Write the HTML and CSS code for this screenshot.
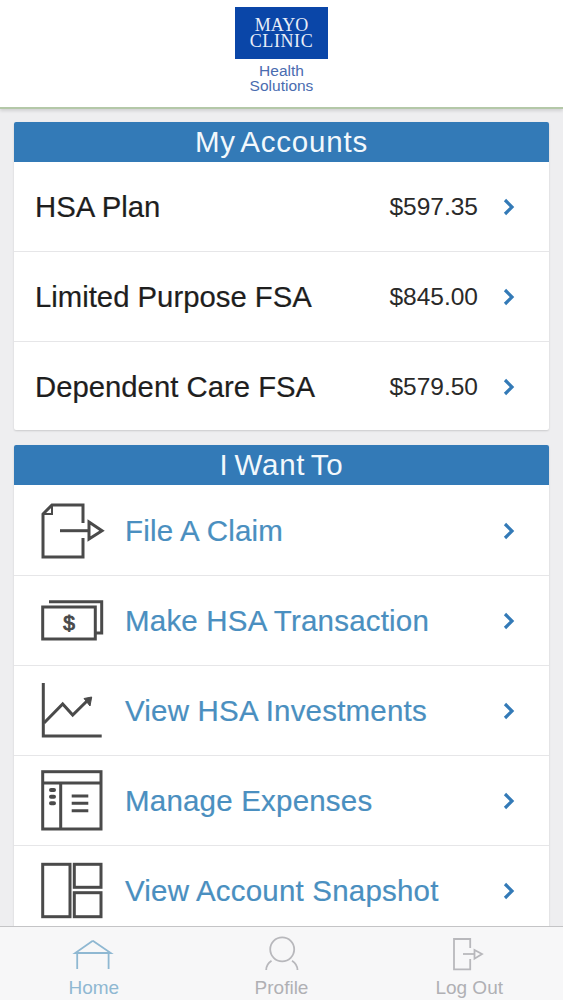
FILE: index.html
```html
<!DOCTYPE html>
<html lang="en">
<head>
<meta charset="utf-8">
<title>Mayo Clinic Health Solutions</title>
<link rel="stylesheet" href="styles.css">
</head>
<body>
<div class="app">
  <header class="top">
    <div class="logo"><span>MAYO</span><span class="clinic">CLINIC</span></div>
    <div class="sub">Health<br>Solutions</div>
  </header>
  <main class="content">
    <section class="card accounts">
      <h2 class="card-title">My Accounts</h2>
      <div class="row"><span class="name">HSA Plan</span><span class="amt">$597.35</span><svg class="chev" viewBox="0 0 12 18"><path d="M2 2l7 7-7 7"/></svg></div>
      <div class="row"><span class="name">Limited Purpose FSA</span><span class="amt">$845.00</span><svg class="chev" viewBox="0 0 12 18"><path d="M2 2l7 7-7 7"/></svg></div>
      <div class="row"><span class="name">Dependent Care FSA</span><span class="amt">$579.50</span><svg class="chev" viewBox="0 0 12 18"><path d="M2 2l7 7-7 7"/></svg></div>
    </section>
    <section class="card">
      <h2 class="card-title">I Want To</h2>
      <div class="row">
        <svg class="ico" viewBox="0 0 64 60"><path d="M43 22V4H12L3 13V56H43V37"/><path class="thin" d="M12 4V13H3"/><path d="M20 29.700H49"/><path d="M49 21L62 29.700L49 38Z"/></svg>
        <span class="link">File A Claim</span><svg class="chev" viewBox="0 0 12 18"><path d="M2 2l7 7-7 7"/></svg>
      </div>
      <div class="row">
        <svg class="ico" viewBox="0 0 64 60"><path d="M9 10.700H61.700V42H56"/><rect x="2.700" y="16" width="52.600" height="32"/><text class="dollar" x="29" y="39">$</text></svg>
        <span class="link">Make HSA Transaction</span><svg class="chev" viewBox="0 0 12 18"><path d="M2 2l7 7-7 7"/></svg>
      </div>
      <div class="row">
        <svg class="ico" viewBox="0 0 64 60"><path d="M3.300 2V55H61.700"/><path d="M4 42L22.700 23L32.700 34L48 19"/><path class="solid" d="M44 17.500L51.700 16L50 25Z"/></svg>
        <span class="link">View HSA Investments</span><svg class="chev" viewBox="0 0 12 18"><path d="M2 2l7 7-7 7"/></svg>
      </div>
      <div class="row">
        <svg class="ico" viewBox="0 0 64 60"><rect x="2.700" y="0.700" width="58.300" height="57.300"/><path d="M2.700 12H61M20.700 12V58"/><path d="M31.700 25H48.300M31.700 32.300H48.300M31.700 39.700H48.300"/><path class="dots" d="M11 19H14M11 25.700H14M11 32.300H14"/></svg>
        <span class="link">Manage Expenses</span><svg class="chev" viewBox="0 0 12 18"><path d="M2 2l7 7-7 7"/></svg>
      </div>
      <div class="row">
        <svg class="ico" viewBox="0 0 64 60"><rect x="2.700" y="3.300" width="27.300" height="52.400"/><rect x="34.300" y="3.300" width="26.700" height="23"/><rect x="34.300" y="31.700" width="26.700" height="24"/></svg>
        <span class="link">View Account Snapshot</span><svg class="chev" viewBox="0 0 12 18"><path d="M2 2l7 7-7 7"/></svg>
      </div>
    </section>
  </main>
  <nav class="tabs">
    <div class="tab active">
      <svg viewBox="0 0 40 36"><path d="M18.800 3.700L1.200 16H36.800L18.800 3.700M3.200 16V32M34.600 16V32"/></svg>
      <span>Home</span>
    </div>
    <div class="tab">
      <svg viewBox="0 0 40 36"><circle cx="20.200" cy="12.300" r="12"/><path d="M4.200 33C4.200 29 6 26 9.500 23.700M35.500 33C35.500 29 33.500 26 30 23.700"/></svg>
      <span>Profile</span>
    </div>
    <div class="tab">
      <svg viewBox="0 0 40 36"><path d="M21.200 11V2H5V32.300H21.200V22"/><path d="M14 17H25.500"/><path d="M25.500 13V21.700L33 17Z"/></svg>
      <span>Log Out</span>
    </div>
  </nav>
</div>
</body>
</html>
```
FILE: styles.css
```css
* { box-sizing: border-box; }
html, body { margin: 0; padding: 0; }
body { font-family: "Liberation Sans", Arial, sans-serif; background: #eeeef0; }
.app { width: 563px; height: 1000px; display: flex; flex-direction: column; overflow: hidden; }
.top { height: 109px; flex: none; background: #fff; border-bottom: 2px solid #b4c8a8; box-shadow: 0 2px 3px rgba(0,0,0,.12); display: flex; flex-direction: column; align-items: center; padding-top: 7px; position: relative; }
.logo { width: 93px; height: 52px; background: #0a46a8; color: #e8eef8; font-family: "Liberation Serif", serif; font-size: 18px; line-height: 16px; display: flex; flex-direction: column; align-items: center; justify-content: center; }
.clinic { letter-spacing: .6px; }
.sub { margin-top: 4px; font-size: 15.500px; line-height: 15px; color: #4a6cb0; text-align: center; }
.content { flex: 1; min-height: 0; overflow: hidden; padding: 13px 14px 0; display: flex; flex-direction: column; gap: 15px; }
.card { flex: none; background: #fff; border-radius: 2px; box-shadow: 0 1px 2px rgba(0,0,0,.15); }
.card-title { margin: 0; height: 40px; background: #337ab7; color: #f2f8fc; font-size: 29.500px; font-weight: 400; letter-spacing: .8px; word-spacing: -3px; line-height: 40px; text-align: center; border-radius: 2px 2px 0 0; }
.row { height: 90px; display: flex; align-items: center; padding: 1px 34px 0 21px; border-top: 1px solid #e6e6e8; }
.accounts .row:first-of-type, .accounts .row:last-child { height: 89px; }
.card-title + .row { border-top: 0; }
.name { flex: 1; font-size: 29.300px; color: #1e1e1e; -webkit-text-stroke: .2px #1e1e1e; white-space: nowrap; }
.amt { font-size: 24.500px; color: #2a2a2a; margin-right: 25px; }
.link { flex: 1; font-size: 29.500px; letter-spacing: .2px; color: #4a8fc0; -webkit-text-stroke: .2px #4a8fc0; white-space: nowrap; margin-left: 21px; }
.chev { width: 12px; height: 18px; flex: none; fill: none; stroke: #337ab7; stroke-width: 3.200; }
.ico { width: 64px; height: 60px; flex: none; margin-left: 5px; fill: none; stroke: #4a4a4a; stroke-width: 3; overflow: visible; }
.ico .thin { stroke-width: 2; }
.ico .solid { fill: #4a4a4a; stroke-width: 1; }
.ico .dots { stroke-width: 4; stroke-linecap: round; }
.ico .dollar { font-family: "Liberation Sans", sans-serif; font-size: 21px; text-anchor: middle; fill: #4a4a4a; stroke: #4a4a4a; stroke-width: .9; }
.tabs { height: 74px; flex: none; background: #f7f7f8; border-top: 1px solid #c4c4c6; display: flex; }
.tab { flex: 1; display: flex; flex-direction: column; align-items: center; padding-top: 10px; color: #b0b0b4; font-size: 19px; line-height: 20px; }
.tab svg { width: 40px; height: 36px; fill: none; stroke: #b8b8bc; stroke-width: 1.800; margin-bottom: 5px; overflow: visible; }
.tab.active { color: #8fb8d2; }
.tab.active svg { stroke: #8fb8d2; }
```
